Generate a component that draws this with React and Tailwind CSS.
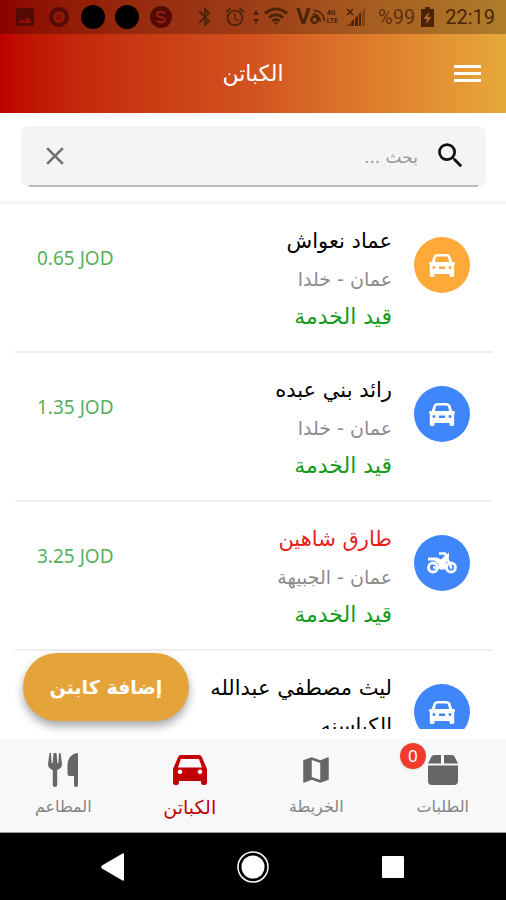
import { IoMdMap } from 'react-icons/io'
import { MdAccessAlarm, MdBluetooth, MdClose, MdPhoto, MdSearch } from 'react-icons/md'

const captains = [
  { name: 'عماد نعواش', city: 'عمان - خلدا', amount: '0.65 JOD', vehicle: 'car', circle: 'bg-[#ffa938]', color: 'text-black' },
  { name: 'رائد بني عبده', city: 'عمان - خلدا', amount: '1.35 JOD', vehicle: 'car', circle: 'bg-[#3f86fb]', color: 'text-black' },
  { name: 'طارق شاهين', city: 'عمان - الجبيهة', amount: '3.25 JOD', vehicle: 'bike', circle: 'bg-[#3f86fb]', color: 'text-[#e8201a]' },
  { name: 'ليث مصطفي عبدالله الكباسنه', city: '', amount: '', vehicle: 'car', circle: 'bg-[#3f86fb]', color: 'text-black' },
]

const tabs = [
  { label: 'الطلبات', icon: BoxIcon, badge: 0 },
  { label: 'الخريطة', icon: MapIcon },
  { label: 'الكباتن', icon: RedCarIcon, active: true },
  { label: 'المطاعم', icon: CutleryIcon },
]

function BoxIcon() {
  return (
    <svg viewBox="0 0 30 30" className="h-[30px] w-[30px]" fill="currentColor">
      <path d="M6 0h7v8.500H0L3.500 1.500Q4.300 0 6 0zM16 0h8q1.700 0 2.500 1.500L30 8.500H16zM0 10.500h30V26q0 4-4 4H4q-4 0-4-4z" />
    </svg>
  )
}

function MapIcon() {
  return <IoMdMap className="h-[34px] w-[34px]" />
}

function RedCarIcon() {
  return (
    <svg viewBox="0 0 34 30" className="h-[30px] w-[34px]" fill="currentColor" fillRule="evenodd">
      <path d="M5 2.200Q5.800 0 8 0h18q2.200 0 3 2.200L34 14v13.500q0 2.500-2.500 2.500h-1q-2.500 0-2.500-2.500V26H6v1.500Q6 30 3.500 30h-1Q0 30 0 27.500V14zM8 4L5 12.500h24L26 4zM7 14.500a2.300 2.300 0 1 0 .01 0zM27 14.500a2.300 2.300 0 1 0 .01 0z" />
    </svg>
  )
}

function CutleryIcon() {
  return (
    <svg viewBox="0 0 30 34" className="h-[34px] w-[30px]" fill="currentColor">
      <path d="M1.500 0H3l.6 10h1L5.500 0h3l.9 10h1L11 0h1.500L14 11q0 4.500-4.800 6v15q0 2-2.200 2t-2.200-2V17Q0 15.500 0 11z" />
      <path d="M30 1v31q0 2-2 2t-2-2v-9h-4.500q-2 0-2-2.500V11Q20.500 2 28.500 0 30 0 30 1z" />
    </svg>
  )
}

function CarIcon() {
  return (
    <svg viewBox="0 0 26 23" className="h-[23px] w-[26px]" fill="currentColor" fillRule="evenodd">
      <path d="M4.500 2.500Q5.500 0 8.500 0h9q3 0 4 2.500L23.200 8h1.300q1.500 0 1.500 1.200T25.200 11v10.500q0 1.500-1.500 1.500H22q-1.500 0-1.500-1.500V20h-15v1.500Q5.500 23 4 23H2.300Q.8 23 .8 21.500V11Q0 10.500 0 9.200T1.500 8h1.300zM8.500 2.500Q7.300 2.500 7 3.500L5.800 8h14.400L19 3.500q-.3-1-1.500-1zM5 12a1.500 1.500 0 1 0 .01 0zM21 12a1.500 1.500 0 1 0 .01 0zM10 12.500v2.500h6v-2.500z" />
    </svg>
  )
}

function BikeIcon() {
  return (
    <svg viewBox="0 0 30 24" className="h-6 w-[30px]" fill="none" stroke="currentColor">
      <circle cx="6" cy="16.500" r="4.500" strokeWidth="2.800" />
      <circle cx="24" cy="16.500" r="4.500" strokeWidth="2.800" />
      <circle cx="24" cy="16.500" r="1" fill="currentColor" />
      <path d="M6 16.500h7" strokeWidth="2.500" />
      <path d="M12 2.500h6L24 16" strokeWidth="2.500" />
      <path d="M1 6.500h9l4 2 3-3 5-4v5l-2 3-2 9h-5l-2-6-4-3H1z" fill="currentColor" stroke="none" />
    </svg>
  )
}

function StatusBar() {
  return (
    <div dir="ltr" className="flex h-[34px] items-center bg-black/25 pl-[13px] pr-[11px] font-['Roboto',sans-serif] text-[20px] leading-6 text-[#4b2408]">
      <div className="flex items-center gap-[10px] text-[#540b05]">
        <MdPhoto className="h-6 w-6" />
        <svg viewBox="0 0 24 24" className="h-6 w-6">
          <circle cx="12" cy="12" r="8" fill="none" stroke="currentColor" strokeWidth="4" />
          <circle cx="12" cy="12" r="3" fill="currentColor" opacity="0.4" />
        </svg>
        <span className="h-6 w-6 rounded-full bg-black" />
        <span className="h-6 w-6 rounded-full bg-black" />
        <svg viewBox="0 0 24 24" className="h-6 w-6">
          <circle cx="12" cy="12" r="11" fill="currentColor" />
          <path d="M16.500 8.500Q12 5.500 9 7.500T9.500 11.500l5 1.500Q17 14.500 15 16.500T7.500 15.800" fill="none" stroke="#91230e" strokeWidth="2" />
        </svg>
      </div>
      <div className="ml-auto flex items-center">
        <MdBluetooth className="h-[22px] w-[22px]" />
        <MdAccessAlarm className="ml-2 h-[22px] w-[22px]" />
        <svg viewBox="0 0 8 16" className="ml-1.5 h-4 w-2" fill="currentColor">
          <path d="M4 1l3 5H1zM4 15l3-5H1z" />
        </svg>
        <svg viewBox="0 0 24 20" className="ml-1 h-5 w-6" fill="none" stroke="currentColor" strokeWidth="3">
          <path d="M1 6.500Q12-2.500 23 6.500M5 10.500q7-5.500 14 0M8.500 14q3.500-3 7 0" />
          <path d="M9.500 15.500h5L12 18z" fill="currentColor" stroke="none" />
        </svg>
        <div className="ml-2 flex w-[42px] items-center">
          <b className="text-[22px] leading-6">V</b>
          <svg viewBox="0 0 18 20" className="h-5 w-[18px]" fill="none" stroke="currentColor">
            <circle cx="5" cy="13" r="3.500" strokeWidth="2.500" />
            <path d="M3 7q6-1 8.500 8M4 3q10-.5 12 11" strokeWidth="2" />
          </svg>
          <span className="flex flex-col text-[7px] font-bold leading-[8px]">
            <span>4G</span>
            <span>LTE</span>
          </span>
        </div>
        <svg viewBox="0 0 20 20" className="ml-2 h-5 w-5" fill="currentColor">
          <path d="M1 19l3-3v3zM5 15l3-3v7H5zM9 11l3-3v11H9zM13 7l2-2v14h-2z" />
          <path d="M16 5l3-4v18h-3z" opacity="0.4" />
          <path d="M1 2l6 6M7 2L1 8" stroke="currentColor" strokeWidth="1.500" />
        </svg>
        <span className="ml-3 opacity-80">%99</span>
        <svg viewBox="0 0 13 20" className="ml-1.5 h-5 w-[13px]" fill="currentColor" fillRule="evenodd">
          <path d="M4 0h5v2h4v18H0V2h4zM8 5L2.500 12H6l-1 5 5.500-7H7z" />
        </svg>
        <span className="ml-[11px]">22:19</span>
      </div>
    </div>
  )
}

function CaptainRow({ captain }) {
  return (
    <li className="ml-[15px] mr-3.5 flex min-h-[149px] items-start border-b-2 border-[#efefef] px-[22px] pb-[15px] pt-[18px]">
      <span className={`mt-[15px] flex h-14 w-14 shrink-0 items-center justify-center rounded-full text-white ${captain.circle}`}>
        {captain.vehicle === 'car' ? <CarIcon /> : <BikeIcon />}
      </span>
      <div className="mr-[22px] w-[196px] leading-[38px]">
        <h2 className={`text-[21px] font-medium ${captain.color}`}>{captain.name}</h2>
        {captain.city && <p className="text-[19px] text-[#8b8b8b]">{captain.city}</p>}
        {captain.city && <p className="text-[22px] font-medium text-[#149a1c]">قيد الخدمة</p>}
      </div>
      <span dir="ltr" className="mr-auto mt-[18px] whitespace-nowrap font-['Noto_Sans',sans-serif] text-[19px] leading-9 text-[#56b05b]">
        {captain.amount}
      </span>
    </li>
  )
}

export default function App() {
  return (
    <div dir="rtl" className="flex h-screen flex-col overflow-hidden bg-white font-['DejaVu_Sans',sans-serif]">
      <header className="bg-linear-to-r from-[#bd0000] via-[#d2521f] to-[#e7a83b]">
        <StatusBar />
        <div className="grid h-[79px] grid-cols-3 items-center px-[25px] text-white">
          <button aria-label="القائمة" className="flex w-[27px] flex-col gap-1">
            <span className="h-[3px] w-full bg-white" />
            <span className="h-[3px] w-full bg-white" />
            <span className="h-[3px] w-full bg-white" />
          </button>
          <h1 className="text-center text-[22px] leading-8">الكباتن</h1>
        </div>
      </header>

      <div className="border-b-[3px] border-[#f4f4f4] pb-3.5 pl-[21px] pr-5 pt-[13px]">
        <div className="rounded-lg bg-[#f4f4f4] px-2">
          <div className="flex h-[61px] items-center border-b-2 border-[#b9b9b9] px-[11px]">
            <MdSearch className="h-[33px] w-[33px] text-[#111111]" />
            <input
              type="text"
              aria-label="بحث"
              placeholder="بحث ..."
              className="ml-3 mr-4 min-w-0 flex-1 bg-transparent pt-1 text-[17px] outline-none placeholder:text-[#999999]"
            />
            <button aria-label="مسح">
              <MdClose className="h-[30px] w-[30px] text-[#707070]" />
            </button>
          </div>
        </div>
      </div>

      <main className="relative mb-[10px] min-h-0 flex-1">
        <ul className="h-full overflow-hidden">
          {captains.map((captain) => (
            <CaptainRow key={captain.name} captain={captain} />
          ))}
        </ul>
        <button className="absolute bottom-2 left-[23px] h-[68px] w-[166px] rounded-full bg-[#e5a43a] text-[19px] font-bold text-white shadow-[0_5px_10px_rgba(0,0,0,0.35)]">
          إضافة كابتن
        </button>
      </main>

      <nav className="grid h-[94px] shrink-0 grid-cols-4 border-b border-[#999999] bg-[#f8f8f8]">
        {tabs.map(({ label, icon: Icon, badge, active }) => (
          <a
            key={label}
            href="#"
            className={`flex flex-col items-center pt-2 ${active ? 'text-[#c00006]' : 'text-[#666666]'}`}
          >
            <span className="relative flex h-[46px] items-center justify-center">
              <Icon />
              {badge !== undefined && (
                <span className="absolute -left-7 -top-1 flex h-[26px] w-[26px] items-center justify-center rounded-full bg-[#f23b2f] font-['Noto_Sans',sans-serif] text-[17px] leading-6 text-white shadow">
                  {badge}
                </span>
              )}
            </span>
            <span className={active ? 'text-[19px] leading-7' : 'text-[16px] leading-7 text-[#858585]'}>{label}</span>
          </a>
        ))}
      </nav>

      <div dir="ltr" className="grid h-[67px] shrink-0 grid-cols-3 place-items-center bg-black px-[43px]">
        <button aria-label="رجوع">
          <svg viewBox="0 0 24 28" className="h-7 w-6" fill="white">
            <path d="M23 1v26q0 1-1.500.500L1 15.500Q-.5 14 1 12.500L21.500.500Q23 0 23 1z" />
          </svg>
        </button>
        <button aria-label="الرئيسية">
          <svg viewBox="0 0 32 32" className="h-8 w-8">
            <circle cx="16" cy="16" r="15" fill="none" stroke="white" strokeWidth="1.500" />
            <circle cx="16" cy="16" r="11.500" fill="white" />
          </svg>
        </button>
        <button aria-label="التطبيقات" className="h-[22px] w-[22px] rounded-[1px] bg-white" />
      </div>
    </div>
  )
}
